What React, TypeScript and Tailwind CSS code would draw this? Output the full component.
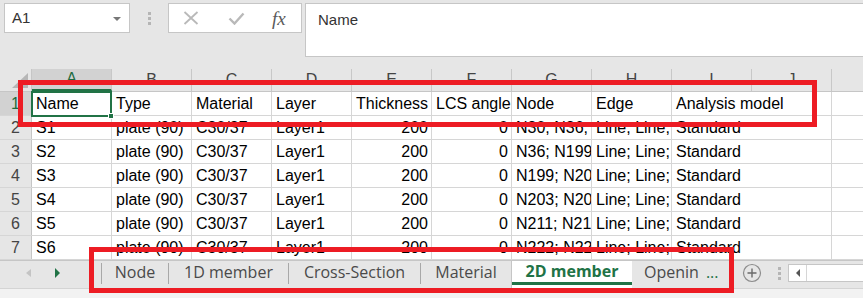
import React from 'react'

const cols = ['A', 'B', 'C', 'D', 'E', 'F', 'G', 'H', 'I', 'J', 'K']

type Row = string[]

// sheet data, columns A..I
const rows: Row[] = [
  ['Name', 'Type', 'Material', 'Layer', 'Thickness', 'LCS angle', 'Node', 'Edge', 'Analysis model'],
  ['S1', 'plate (90)', 'C30/37', 'Layer1', '200', '0', 'N30; N36;', 'Line; Line;', 'Standard'],
  ['S2', 'plate (90)', 'C30/37', 'Layer1', '200', '0', 'N36; N199', 'Line; Line;', 'Standard'],
  ['S3', 'plate (90)', 'C30/37', 'Layer1', '200', '0', 'N199; N20', 'Line; Line;', 'Standard'],
  ['S4', 'plate (90)', 'C30/37', 'Layer1', '200', '0', 'N203; N20', 'Line; Line;', 'Standard'],
  ['S5', 'plate (90)', 'C30/37', 'Layer1', '200', '0', 'N211; N21', 'Line; Line;', 'Standard'],
  ['S6', 'plate (90)', 'C30/37', 'Layer1', '200', '0', 'N222; N22', 'Line; Line;', 'Standard'],
]

const tabs = [
  { name: 'Node', w: 'w-[67px]' },
  { name: '1D member', w: 'w-[120px]' },
  { name: 'Cross-Section', w: 'w-[132px]' },
  { name: 'Material', w: 'w-[91px]' },
]

function FormulaBar() {
  return (
    <div className="h-[69px] flex items-start pt-[3px] pl-[4px]">
      {/* name box */}
      <div className="w-[126px] h-[30px] bg-white border border-[#c6c6c6] flex items-center pl-[7px] pr-[8px] justify-between">
        <span className="text-[15px] text-[#333]">A1</span>
        <span className="w-0 h-0 border-l-[4px] border-r-[4px] border-t-[4px] border-l-transparent border-r-transparent border-t-[#777] mt-[1px]" />
      </div>
      {/* grip dots */}
      <div className="w-[38px] h-[30px] flex flex-col items-center justify-center gap-[2px]">
        <span className="w-[3px] h-[3px] bg-[#b5b5b5]" />
        <span className="w-[3px] h-[3px] bg-[#b5b5b5]" />
        <span className="w-[3px] h-[3px] bg-[#b5b5b5]" />
      </div>
      {/* cancel / enter / fx */}
      <div className="w-[134px] h-[30px] bg-white border border-[#c6c6c6] flex items-center pl-[14px]">
        <svg width="16" height="14" viewBox="0 0 16 14" className="mr-[29px]">
          <path d="M1.5 1 L14.5 13 M14.5 1 L1.5 13" stroke="#b9b9b9" strokeWidth="1.8" />
        </svg>
        <svg width="17" height="13" viewBox="0 0 17 13" className="mr-[27px]">
          <path d="M1.5 6.5 L6.5 11.5 L15.5 1.5" stroke="#b9b9b9" strokeWidth="2.4" fill="none" />
        </svg>
        <span className="font-['Liberation_Serif',serif] italic text-[19px] text-[#5a5a5a] leading-none">fx</span>
      </div>
      {/* formula input */}
      <div className="ml-[3px] flex-1 h-[54px] bg-white border border-[#c6c6c6] border-r-0 pl-[12px] pt-[4px]">
        <span className="text-[15px] text-[#333]">Name</span>
      </div>
    </div>
  )
}

function HeaderRow() {
  return (
    <div className="h-[23px] flex bg-[#e6e6e6] border-b border-[#c6c6c6]">
      <div className="w-[32px] shrink-0 border-r border-[#c6c6c6] flex items-end justify-end pr-[3px] pb-[3px]">
        <svg width="16" height="15" viewBox="0 0 16 15">
          <path d="M16 0 L16 15 L0 15 Z" fill="#b6b6b6" />
        </svg>
      </div>
      {cols.map((c, i) => (
        <div
          key={c}
          className={`w-[80px] shrink-0 border-r border-[#c8c8c8] flex items-center justify-center text-[16px] ${
            i === 0 ? 'bg-[#d2d2d2] text-[#1f6b40] border-b-2 border-b-[#217346]' : 'text-[#444]'
          }`}
        >
          {i < 10 ? c : ''}
        </div>
      ))}
    </div>
  )
}

function Cell({ text, col, row }: { text: string; col: number; row: number }) {
  const numeric = col === 4 || col === 5
  const head = row === 0

  if (head && col === 5) {
    return (
      <div className="w-[80px] shrink-0 border-r border-[#d6d6d6] flex items-center">
        <span className="w-[2px] h-[15px] bg-[#f0a25a]" />
        <span className="ml-[4px] whitespace-nowrap">{text}</span>
        <span className="flex-1" />
        <span className="w-[2px] h-[15px] bg-[#1f2f6b] mr-[1px]" />
      </div>
    )
  }

  const alignRight = numeric && !head
  const overflow = col === 8
  return (
    <div
      className={`w-[80px] shrink-0 flex items-center whitespace-nowrap ${
        overflow ? 'overflow-visible' : 'overflow-hidden border-r border-[#d6d6d6]'
      } ${alignRight ? 'justify-end pr-[3px]' : 'pl-[4px]'}`}
    >
      {text}
    </div>
  )
}

function Grid() {
  return (
    <div className="text-[16px] text-black">
      {rows.map((r, ri) => (
        <div key={ri} className="h-[24px] flex border-b border-[#d6d6d6] bg-white">
          <div
            className={`w-[32px] shrink-0 border-r border-[#c6c6c6] flex items-center justify-center ${
              ri === 0 ? 'bg-[#d2d2d2] text-[#1f6b40]' : 'bg-[#e6e6e6] text-[#444]'
            }`}
          >
            {ri + 1}
          </div>
          {cols.map((c, ci) => (
            <Cell key={c} text={r[ci] ?? ''} col={ci} row={ri} />
          ))}
        </div>
      ))}
    </div>
  )
}

function TabBar() {
  return (
    <div className="h-[28px] flex items-stretch bg-[#e6e6e6] border-t border-[#c6c6c6] font-['Open_Sans',sans-serif] text-[16px] text-[#4a4a4a]">
      {/* sheet scroll arrows */}
      <div className="w-[101px] shrink-0 flex items-center pl-[26px] pb-[3px]">
        <span className="w-0 h-0 border-t-[4px] border-b-[4px] border-r-[5px] border-t-transparent border-b-transparent border-r-[#c4c4c4]" />
        <span className="ml-[24px] w-0 h-0 border-t-[5px] border-b-[5px] border-l-[5px] border-t-transparent border-b-transparent border-l-[#217346]" />
      </div>
      {tabs.map(t => (
        <div key={t.name} className={`${t.w} shrink-0 flex items-center pb-[3px]`}>
          <span className="w-px h-[21px] bg-[#a8a8a8]" />
          <span className="flex-1 text-center leading-none pb-[3px]">{t.name}</span>
        </div>
      ))}
      {/* active sheet */}
      <div className="w-[121px] shrink-0 bg-white border-l border-[#c6c6c6] flex flex-col">
        <span className="flex-1 flex items-center justify-center font-bold text-[#217346] leading-none pb-[1px]">2D member</span>
        <span className="h-[3px] bg-[#217346] mb-[3px]" />
      </div>
      <div className="w-[101px] shrink-0 flex items-center pl-[12px] pb-[5px]">
        <span className="leading-none">Openin</span>
        <span className="ml-[7px] text-[#217346] leading-none">...</span>
      </div>
      {/* new sheet */}
      <div className="w-[38px] shrink-0 flex items-center justify-center pb-[3px]">
        <svg width="20" height="20" viewBox="0 0 20 20">
          <circle cx="10" cy="10" r="8.5" fill="none" stroke="#8c8c8c" strokeWidth="1.2" />
          <path d="M10 5.5 V14.5 M5.5 10 H14.5" stroke="#6a6a6a" strokeWidth="1.4" />
        </svg>
      </div>
      <div className="w-[17px] shrink-0 flex flex-col items-center justify-center gap-[2px] pb-[3px]">
        <span className="w-[3px] h-[3px] bg-[#b5b5b5]" />
        <span className="w-[3px] h-[3px] bg-[#b5b5b5]" />
        <span className="w-[3px] h-[3px] bg-[#b5b5b5]" />
      </div>
      {/* horizontal scrollbar */}
      <div className="flex-1 flex items-center pb-[3px]">
        <div className="flex-1 h-[18px] bg-white border border-[#c6c6c6] border-r-0 flex">
          <div className="w-[18px] border-r border-[#d6d6d6] flex items-center justify-center">
            <span className="w-0 h-0 border-t-[4px] border-b-[4px] border-r-[4px] border-t-transparent border-b-transparent border-r-[#555]" />
          </div>
        </div>
      </div>
    </div>
  )
}

export default function App() {
  return (
    <div className="relative w-[863px] h-[298px] overflow-hidden bg-[#e6e6e6] font-['Liberation_Sans',sans-serif]">
      <FormulaBar />
      <HeaderRow />
      <Grid />
      <TabBar />
      <div className="h-[10px] bg-[#f2f2f2] border-t border-[#d4d4d4]" />

      {/* selected cell A1 */}
      <div className="absolute left-[31px] top-[91px] w-[81px] h-[26px] border-2 border-[#217346]" />
      <div className="absolute left-[108px] top-[113px] w-[6px] h-[6px] bg-[#217346] border border-white" />

      {/* red annotation boxes */}
      <div className="absolute left-[18px] top-[80px] w-[799px] h-[47px] border-[5px] border-[#ed1c24]" />
      <div className="absolute left-[89px] top-[247px] w-[645px] h-[46px] border-[5px] border-[#ed1c24]" />
    </div>
  )
}
